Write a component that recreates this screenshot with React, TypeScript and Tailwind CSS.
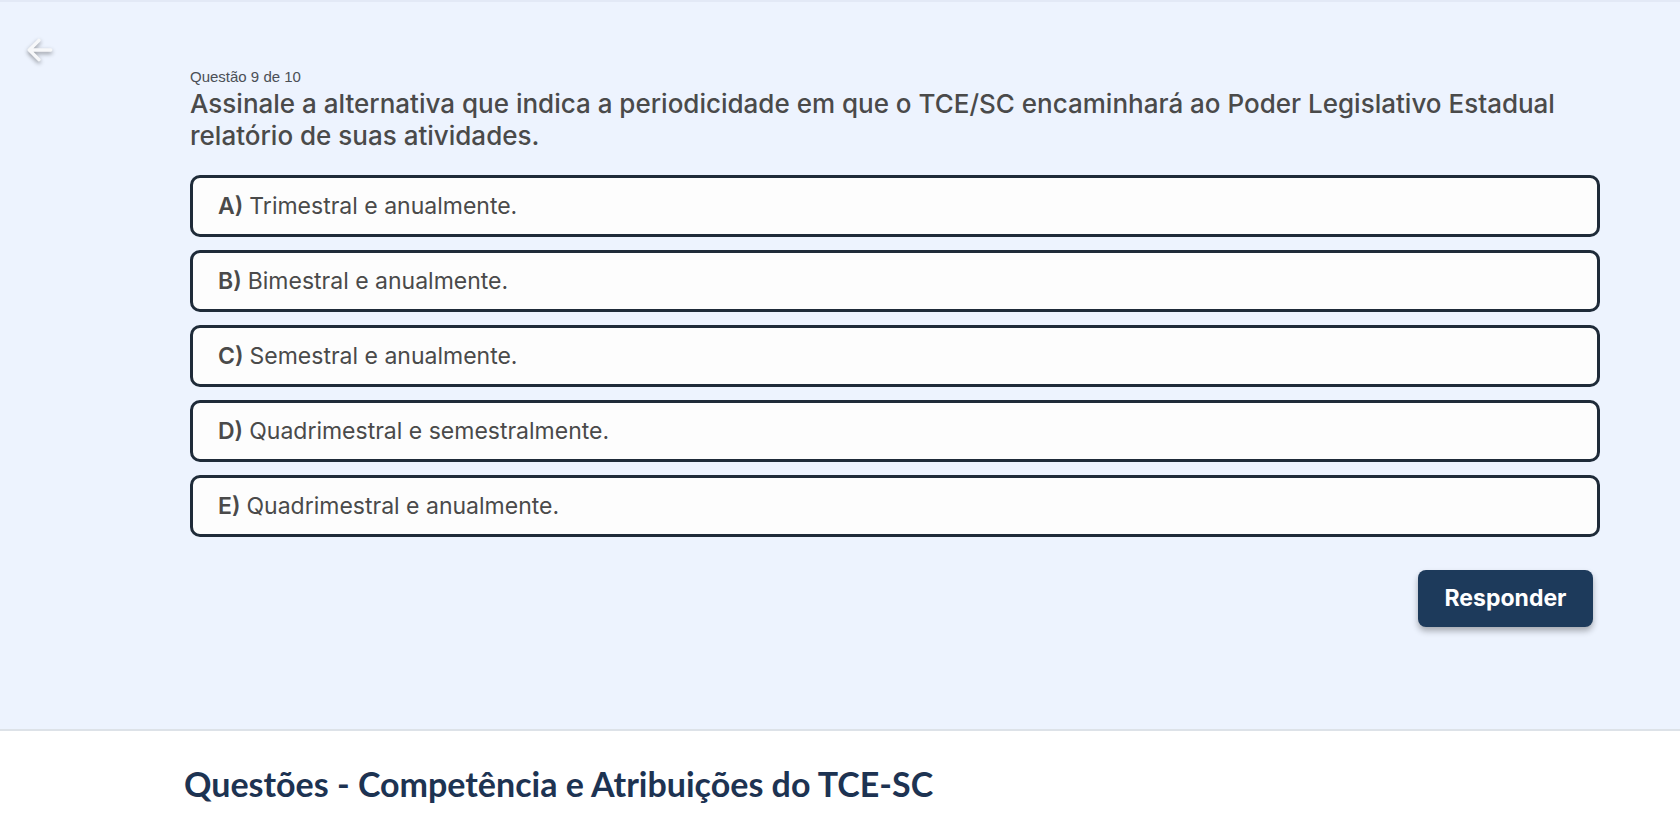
import React from "react";

const options = [
  { l: "A)", t: "Trimestral e anualmente." },
  { l: "B)", t: "Bimestral e anualmente." },
  { l: "C)", t: "Semestral e anualmente." },
  { l: "D)", t: "Quadrimestral e semestralmente." },
  { l: "E)", t: "Quadrimestral e anualmente." },
];

export default function App() {
  return (
    <div className="min-h-[837px] w-full bg-white">
      <div className="h-[731px] bg-[#edf3fe] border-t-2 border-[#e3e9f6] border-b-2 border-b-[#dde2e8] flex">
        <div className="w-[190px] shrink-0 pl-[25px] pt-[33px]">
          <svg width="30" height="30" viewBox="0 0 28 28" className="drop-shadow-[0_2px_2px_rgba(0,0,0,0.4)]">
            <path d="M24 14H5M13 5l-9 9 9 9" fill="none" stroke="#f7f8fa" strokeWidth="3.2" strokeLinecap="round" strokeLinejoin="round" />
          </svg>
        </div>
        <div className="flex-1 pr-[80px] pt-[66px]">
          <div className="text-[15px] leading-[18px] text-[#4b4f56] font-['Liberation_Sans',Arial,sans-serif]">
            Questão 9 de 10
          </div>
          <h1 className="mt-[2px] text-[26px] leading-[32px] font-medium text-[#4a4a4a] font-['Inter',sans-serif]">
            Assinale a alternativa que indica a periodicidade em que o TCE/SC encaminhará ao Poder Legislativo Estadual relatório de suas atividades.
          </h1>
          <div className="mt-[23px] flex flex-col gap-[13px]">
            {options.map((o) => (
              <div
                key={o.l}
                className="h-[62px] rounded-[10px] border-[3px] border-[#1f2b39] bg-[#fdfdfd] flex items-center px-[25px] text-[23px] text-[#4a4a4a] font-['Inter',sans-serif]"
              >
                <span className="font-semibold mr-[6px]">{o.l}</span>
                <span>{o.t}</span>
              </div>
            ))}
          </div>
          <div className="mt-[33px] flex justify-end pr-[7px]">
            <button className="h-[57px] w-[175px] rounded-[8px] bg-[#1d3a5b] text-white text-[23px] font-bold font-['Inter',sans-serif] shadow-[0_4px_6px_rgba(0,0,0,0.3)]">
              Responder
            </button>
          </div>
        </div>
      </div>
      <div className="pl-[184px] pt-[31px]">
        <h2 className="text-[34px] leading-[44px] font-bold text-[#1d3352] font-['Lato',sans-serif]">
          Questões - Competência e Atribuições do TCE-SC
        </h2>
      </div>
    </div>
  );
}
